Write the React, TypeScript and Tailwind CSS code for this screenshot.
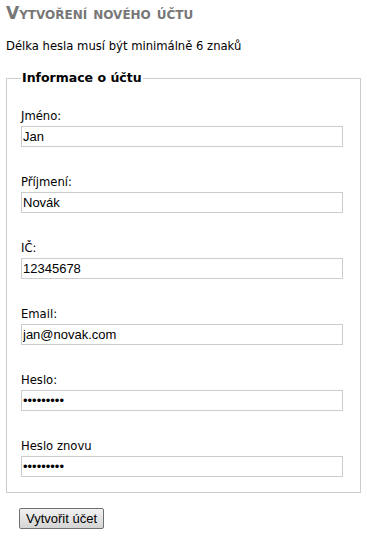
import React from 'react';

const fields = [
  { label: 'Jméno:', value: 'Jan', type: 'text' },
  { label: 'Příjmení:', value: 'Novák', type: 'text' },
  { label: 'IČ:', value: '12345678', type: 'text' },
  { label: 'Email:', value: 'jan@novak.com', type: 'text' },
  { label: 'Heslo:', value: 'heslo1234', type: 'password' },
  { label: 'Heslo znovu', value: 'heslo1234', type: 'password' },
];

export default function App() {
  return (
    <div className="min-h-[536px] bg-white px-[6px] pt-[2px] text-[12px] text-black [font-family:'DejaVu_Sans',sans-serif]">
      {/* Title */}
      <h1 className="text-[17px] font-bold leading-[22px] text-[#777] [font-variant:small-caps]">
        Vytvoření nového účtu
      </h1>
      <p className="mt-[14px] text-[11.6px] leading-[16px]">Délka hesla musí být minimálně 6 znaků</p>

      <fieldset className="mt-[16px] w-[355px] border border-[#ccc] px-[14px] pb-[15px]">
        <legend className="px-px text-[12.5px] font-bold leading-[16px]">Informace o účtu</legend>
        <div className="flex flex-col gap-[27px] pt-[22px]">
          {fields.map((f) => (
            <div key={f.label} className="flex flex-col">
              <label className="text-[11.6px] leading-[16px]">{f.label}</label>
              <input
                type={f.type}
                defaultValue={f.value}
                className="mt-[2px] h-[21px] w-[322px] border border-[#ccc] px-[1px] text-[13px] text-black outline-none [font-family:'Liberation_Sans',Arial,sans-serif]"
              />
            </div>
          ))}
        </div>
      </fieldset>

      <button className="mt-[15px] ml-[13px] h-[21px] rounded-[2px] border border-[#707070] bg-gradient-to-b from-[#f2f2f2] to-[#d4d4d4] px-[6px] text-[13px] leading-[18px] text-black [font-family:'Liberation_Sans',Arial,sans-serif]">
        Vytvořit účet
      </button>
    </div>
  );
}
